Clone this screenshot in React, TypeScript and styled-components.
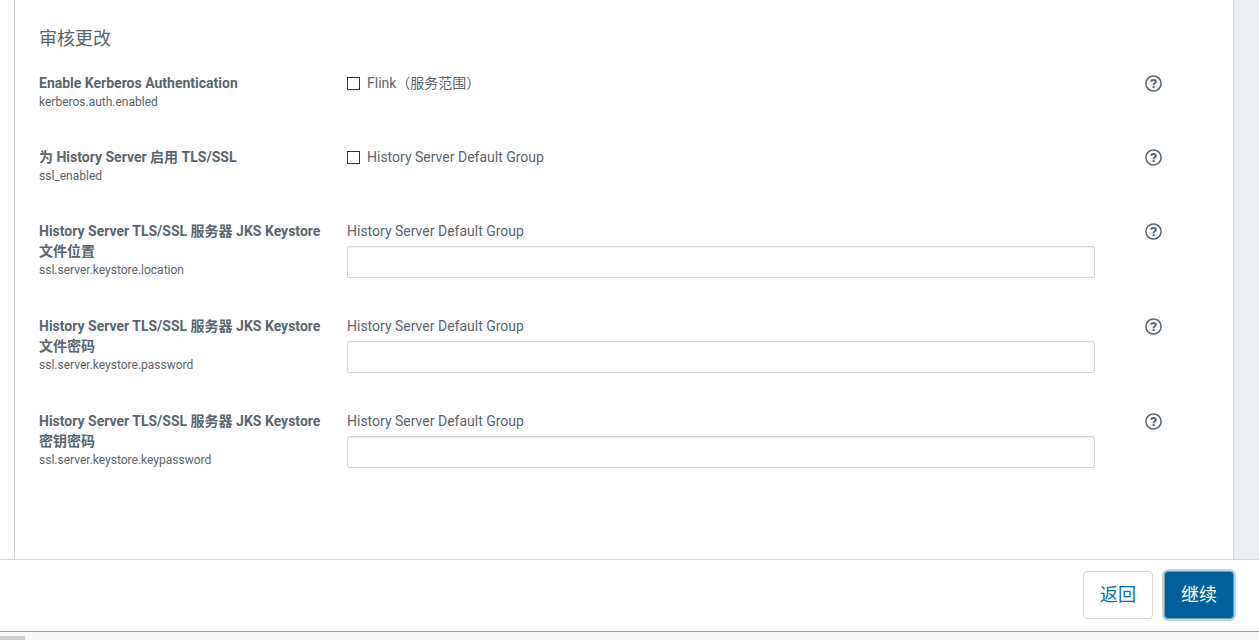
import React from "react";
import styled, { createGlobalStyle } from "styled-components";

const GlobalStyle = createGlobalStyle`
  *, *::before, *::after { box-sizing: border-box; }
  body {
    margin: 0;
    background: #fff;
    color: #5a656d;
    font-family: Roboto, "Noto Sans CJK SC", sans-serif;
    font-size: 14px;
    line-height: 20px;
  }
`;

const Page = styled.div`
  display: flex;
  flex-direction: column;
  height: 100vh;
`;

const Body = styled.div`
  display: flex;
  flex: 1;
  min-height: 0;
  padding-left: 14px;
`;

const Panel = styled.main`
  flex: 1;
  padding: 27px 24px 0;
  border: solid #d3d6d9;
  border-width: 0 1px;
  overflow: hidden;
`;

const Gutter = styled.div`
  width: 25px;
  background: #e9edf0;
`;

const Title = styled.h1`
  margin: 0 0 22px;
  font-size: 18px;
  line-height: 24px;
  font-weight: 400;
`;

const Row = styled.div<{ $tall?: boolean }>`
  display: grid;
  grid-template-columns: 284px minmax(0, 1fr) 64px;
  column-gap: 24px;
  align-items: start;
  min-height: ${(p) => (p.$tall ? 59 : 38)}px;
  margin-bottom: 36px;
`;

const Name = styled.div`
  font-weight: 700;
`;

const Property = styled.div`
  font-size: 12px;
  line-height: 18px;
`;

const Field = styled.div`
  display: flex;
  flex-direction: column;
  gap: 5px;
  margin-right: 26px;
`;

const CheckLabel = styled.label`
  display: flex;
  align-items: center;
  gap: 7px;
`;

const Checkbox = styled.input`
  appearance: none;
  width: 13px;
  height: 13px;
  margin: 0;
  border: 1px solid #333;
  background: #fff;
  &:checked { background: #00609c; }
`;

const TextInput = styled.input`
  width: 100%;
  height: 32px;
  padding: 4px 8px;
  border: 1px solid #d3d6d9;
  border-radius: 2px;
  box-shadow: inset 0 1px 1px rgba(0, 0, 0, 0.07);
  color: inherit;
  font: inherit;
`;

const HelpButton = styled.button`
  display: flex;
  width: 17px;
  height: 20px;
  padding: 0;
  border: 0;
  background: none;
  color: #5a656d;
  align-items: center;
  justify-content: center;
  cursor: pointer;
`;

const Footer = styled.footer`
  display: flex;
  justify-content: flex-end;
  gap: 11px;
  padding: 11px 25px 12px;
  border-top: 1px solid #d3d6d9;
`;

const Button = styled.button<{ $primary?: boolean }>`
  height: 48px;
  padding: 0 16px;
  border: 1px solid ${(p) => (p.$primary ? "#7b98aa" : "#d3d6d9")};
  border-radius: 4px;
  background: ${(p) => (p.$primary ? "#00609c" : "#fff")};
  box-shadow: ${(p) => (p.$primary ? "0 0 0 2px #bcd8e7" : "none")};
  color: ${(p) => (p.$primary ? "#fff" : "#0070a8")};
  font-family: inherit;
  font-size: 18px;
  line-height: 24px;
  cursor: pointer;
`;

const ScrollTrack = styled.div`
  height: 9px;
  padding-top: 4px;
  border-top: 1px solid #999;
  background: #f8f8f8;
`;

const ScrollThumb = styled.div`
  width: 25px;
  height: 4px;
  border-top-right-radius: 1px;
  background: #cdcdcd;
`;

function HelpIcon() {
  return (
    <svg width="17" height="17" viewBox="0 0 17 17" fill="none" stroke="currentColor" aria-hidden="true">
      <circle cx="8.5" cy="8.5" r="7.6" strokeWidth="1.5" />
      <path d="M5.9 6.7C6.4 5.5 7.3 4.9 8.5 4.9C9.9 4.9 10.8 5.6 10.8 6.7C10.8 8.3 8.6 8.2 8.6 10.2" strokeWidth="2" />
      <path d="M7.5 12.1H9.7" strokeWidth="2" />
    </svg>
  );
}

interface Setting {
  name: string;
  property: string;
  scope: string;
  kind: "check" | "text" | "password";
}

const settings: Setting[] = [
  { name: "Enable Kerberos Authentication", property: "kerberos.auth.enabled", scope: "Flink（服务范围）", kind: "check" },
  { name: "为 History Server 启用 TLS/SSL", property: "ssl_enabled", scope: "History Server Default Group", kind: "check" },
  { name: "History Server TLS/SSL 服务器 JKS Keystore 文件位置", property: "ssl.server.keystore.location", scope: "History Server Default Group", kind: "text" },
  { name: "History Server TLS/SSL 服务器 JKS Keystore 文件密码", property: "ssl.server.keystore.password", scope: "History Server Default Group", kind: "password" },
  { name: "History Server TLS/SSL 服务器 JKS Keystore 密钥密码", property: "ssl.server.keystore.keypassword", scope: "History Server Default Group", kind: "password" },
];

function SettingRow({ name, property, scope, kind }: Setting) {
  return (
    <Row $tall={kind !== "check"}>
      <div>
        <Name>{name}</Name>
        <Property>{property}</Property>
      </div>
      <Field>
        {kind === "check" ? (
          <CheckLabel htmlFor={property}>
            <Checkbox type="checkbox" id={property} />
            {scope}
          </CheckLabel>
        ) : (
          <>
            <label htmlFor={property}>{scope}</label>
            <TextInput type={kind} id={property} />
          </>
        )}
      </Field>
      <HelpButton type="button" aria-label={name}>
        <HelpIcon />
      </HelpButton>
    </Row>
  );
}

export default function App() {
  return (
    <Page lang="zh-CN">
      <GlobalStyle />
      <Body>
        <Panel>
          <Title>审核更改</Title>
          {settings.map((s) => (
            <SettingRow key={s.property} {...s} />
          ))}
        </Panel>
        <Gutter />
      </Body>
      <Footer>
        <Button type="button">返回</Button>
        <Button type="button" $primary>继续</Button>
      </Footer>
      <ScrollTrack>
        <ScrollThumb />
      </ScrollTrack>
    </Page>
  );
}
